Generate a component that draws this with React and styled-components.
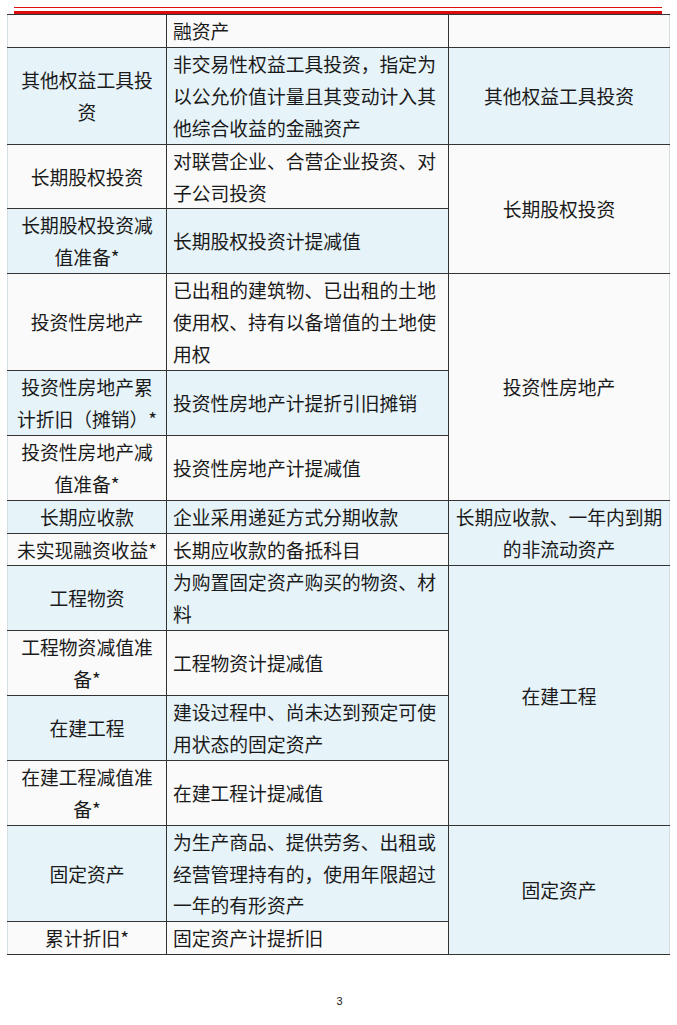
import React from "react"
import styled, { createGlobalStyle } from "styled-components"

const GlobalStyle = createGlobalStyle`
  html, body {
    margin: 0;
    padding: 0;
    background: #ffffff;
  }
  body {
    font-family: "Noto Sans CJK SC", "Noto Sans", sans-serif;
    color: #1a1a1a;
  }
`

const Page = styled.div`
  width: 677px;
  height: 1025px;
  padding-top: 7px;
  box-sizing: border-box;
  display: flex;
  flex-direction: column;
`

const HeaderRule = styled.div`
  margin: 0 15px 0 14px;
  height: 6px;
  border-top: 1px solid #e01010;
  display: flex;
  flex-direction: column;
  justify-content: flex-end;

  &::after {
    content: "";
    height: 3px;
    background: #d80c0c;
  }
`

const Table = styled.table`
  margin-left: 7px;
  width: 662px;
  border-collapse: collapse;
  table-layout: fixed;
  border-top: 1px solid #7a7a7a;
  border-left: 1px solid #d3dde2;
  border-right: 1px solid #d3dde2;
  border-bottom: 1px solid #2e2e2e;
`

const Row = styled.tr`
  background: ${(p) => (p.$tint ? "#e6f3f9" : "#fafafa")};
`

const Cell = styled.td`
  padding: 0 ${(p) => (p.$tight ? "4px" : "6px")};
  font-size: 18.8px;
  line-height: 31.9px;
  text-align: ${(p) => (p.$left ? "left" : "center")};
  vertical-align: middle;
  border-top: 1px solid #333;
  border-bottom: 1px solid #333;
  word-break: break-all;

  & + & {
    border-left: 1px solid #333;
  }
`

const PageNumber = styled.div`
  margin-top: 40px;
  text-align: center;
  font-family: "Liberation Sans", sans-serif;
  font-size: 11px;
  color: #222;
  padding-left: 2px;
`

const rows = [
  { a: "", b: "融资产", c: "", span: 1 },
  { a: "其他权益工具投资", b: "非交易性权益工具投资，指定为以公允价值计量且其变动计入其他综合收益的金融资产", c: "其他权益工具投资", span: 1 },
  { a: "长期股权投资", b: "对联营企业、合营企业投资、对子公司投资", c: "长期股权投资", span: 2 },
  { a: "长期股权投资减值准备*", b: "长期股权投资计提减值" },
  { a: "投资性房地产", b: "已出租的建筑物、已出租的土地使用权、持有以备增值的土地使用权", c: "投资性房地产", span: 3 },
  { a: "投资性房地产累计折旧（摊销）*", b: "投资性房地产计提折引旧摊销" },
  { a: "投资性房地产减值准备*", b: "投资性房地产计提减值" },
  { a: "长期应收款", b: "企业采用递延方式分期收款", c: "长期应收款、一年内到期的非流动资产", span: 2 },
  { a: "未实现融资收益*", b: "长期应收款的备抵科目" },
  { a: "工程物资", b: "为购置固定资产购买的物资、材料", c: "在建工程", span: 4 },
  { a: "工程物资减值准备*", b: "工程物资计提减值" },
  { a: "在建工程", b: "建设过程中、尚未达到预定可使用状态的固定资产" },
  { a: "在建工程减值准备*", b: "在建工程计提减值" },
  { a: "固定资产", b: "为生产商品、提供劳务、出租或经营管理持有的，使用年限超过一年的有形资产", c: "固定资产", span: 2 },
  { a: "累计折旧*", b: "固定资产计提折旧" },
]

export default function App() {
  return (
    <Page>
      <GlobalStyle />
      <HeaderRule />
      <Table>
        <colgroup>
          <col style={{ width: 159 }} />
          <col style={{ width: 282 }} />
          <col style={{ width: 221 }} />
        </colgroup>
        <tbody>
          {rows.map((r, i) => (
            <Row key={i} $tint={i % 2 === 1}>
              <Cell>{r.a}</Cell>
              <Cell $left>{r.b}</Cell>
              {r.span ? <Cell $tight rowSpan={r.span}>{r.c}</Cell> : null}
            </Row>
          ))}
        </tbody>
      </Table>
      <PageNumber>3</PageNumber>
    </Page>
  )
}
